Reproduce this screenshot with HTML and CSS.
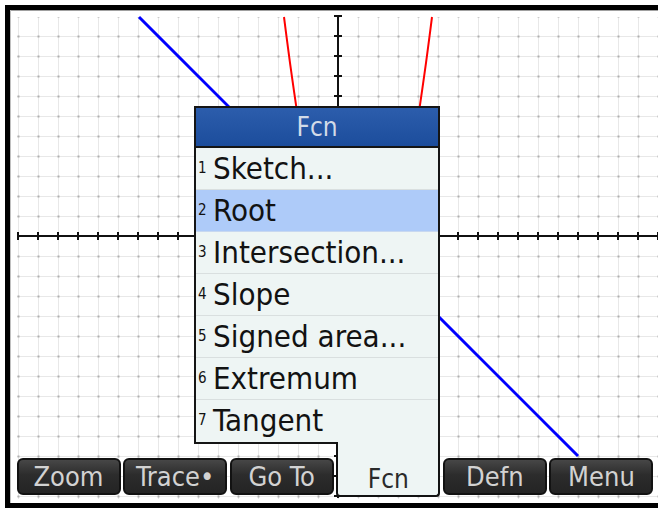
FILE: index.html
```html
<!DOCTYPE html>
<html>
<head>
<meta charset="utf-8">
<link rel="stylesheet" href="styles.css">
</head>
<body>
<div class="screen">
  <svg class="plot" width="648" height="493" viewBox="10 10 648 493" xmlns="http://www.w3.org/2000/svg">
    <defs>
      <pattern id="grid" patternUnits="userSpaceOnUse" x="17" y="15" width="20" height="20">
        <rect x="1" y="0" width="1" height="20" fill="#e8e8e8"/>
        <rect x="0" y="1" width="20" height="1" fill="#e8e8e8"/>
        <rect x="0.5" y="0.5" width="2" height="2" fill="#b0b0b0"/>
      </pattern>
    </defs>
    <rect x="10" y="10" width="648" height="1" fill="#a0a0a0"/>
    <rect x="10" y="10" width="1" height="493" fill="#c0c0c0"/>
    <rect x="17" y="17" width="641" height="482" fill="url(#grid)"/>
    <line x1="17" y1="236" x2="658" y2="236" stroke="#111" stroke-width="2"/>
    <line x1="17" y1="236" x2="658" y2="236" stroke="#111" stroke-width="8" stroke-dasharray="2 18"/>
    <line x1="338" y1="16" x2="338" y2="498" stroke="#111" stroke-width="2"/>
    <line x1="338" y1="15" x2="338" y2="498" stroke="#111" stroke-width="8" stroke-dasharray="2 18"/>
    <line x1="139" y1="17" x2="578" y2="456" stroke="#0000ff" stroke-width="3"/>
    <polyline points="284,17 286,32.6 288,47.9 290,62.8 292,77.2 294,91.2 296,104.8 298,118" fill="none" stroke="#ff0000" stroke-width="2"/>
    <polyline points="432,17 430,32.6 428,47.9 426,62.8 424,77.2 422,91.2 420,104.8 418,118" fill="none" stroke="#ff0000" stroke-width="2"/>
  </svg>

  <div class="menu">
    <div class="menu-title">Fcn</div>
    <div class="item"><span class="num">1</span>Sketch...</div>
    <div class="item selected"><span class="num">2</span>Root</div>
    <div class="item"><span class="num">3</span>Intersection...</div>
    <div class="item"><span class="num">4</span>Slope</div>
    <div class="item"><span class="num">5</span>Signed area...</div>
    <div class="item"><span class="num">6</span>Extremum</div>
    <div class="item last"><span class="num">7</span>Tangent</div>
  </div>

  <div class="keys">
    <div class="key">Zoom</div>
    <div class="key">Trace•</div>
    <div class="key">Go To</div>
    <div class="key tab">Fcn</div>
    <div class="key">Defn</div>
    <div class="key">Menu</div>
  </div>
</div>
</body>
</html>
```

FILE: styles.css
```css
html, body {
  margin: 0;
  padding: 0;
  background: #ffffff;
}

body {
  font-family: "DejaVu Sans Condensed", "DejaVu Sans", "Liberation Sans", sans-serif;
  width: 658px;
  height: 508px;
  overflow: hidden;
}

.screen {
  position: relative;
  margin: 5px 0 0 5px;
  width: 648px;
  height: 493px;
  border-top: 5px solid #000;
  border-left: 5px solid #000;
  border-bottom: 5px solid #000;
  background: #fff;
  display: flex;
  flex-direction: column;
  justify-content: flex-end;
  overflow: hidden;
}

.plot {
  position: absolute;
  left: 0;
  top: 0;
  display: block;
}

.menu {
  position: absolute;
  left: 184px;
  top: 96px;
  width: 246px;
  box-sizing: border-box;
  border: 2px solid #151515;
  background: #eef5f4;
  z-index: 1;
}

.menu-title {
  height: 38px;
  line-height: 38px;
  text-align: center;
  font-size: 26px;
  color: #d3dbe8;
  background: linear-gradient(#2c5dac, #1c4d9c);
  border-bottom: 2px solid #151515;
}

.item {
  height: 42px;
  line-height: 40px;
  box-sizing: border-box;
  padding-left: 2px;
  font-size: 31px;
  color: #121212;
  border-bottom: 1px solid #d9dfdf;
  white-space: nowrap;
}

.item.last {
  border-bottom: none;
}

.item.selected {
  background: #aecbf9;
  border-bottom-color: #c8d8f0;
}

.num {
  display: inline-block;
  width: 15px;
  font-size: 15px;
  line-height: 15px;
  vertical-align: 6px;
}

.keys {
  position: relative;
  display: flex;
  align-items: flex-end;
  gap: 2.6px;
  padding: 0 0 6px 6.5px;
}

.key {
  position: relative;
  width: 104px;
  height: 37px;
  margin-bottom: 2px;
  box-sizing: border-box;
  border: 2px solid #121212;
  border-radius: 6px;
  background: linear-gradient(#474747, #2c2c2c 45%, #242424);
  color: #d2d2d2;
  font-size: 27px;
  line-height: 33px;
  text-align: center;
  white-space: nowrap;
}

.key.tab {
  z-index: 2;
  height: 55px;
  margin-bottom: 0;
  border-top: none;
  border-radius: 0 0 4px 4px;
  background: #eef5f4;
  color: #2a2a2a;
  display: flex;
  flex-direction: column;
  justify-content: flex-end;
  padding-bottom: 3px;
  font-size: 26px;
  line-height: 26px;
}
```
